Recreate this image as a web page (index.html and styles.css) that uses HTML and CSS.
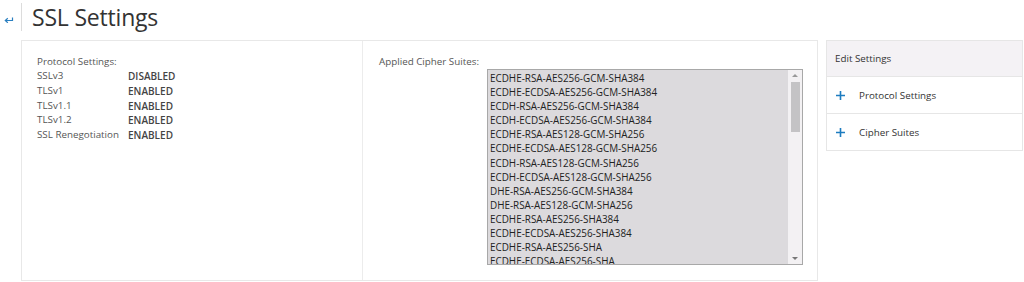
FILE: index.html
```html
<!DOCTYPE html>
<html>
<head>
<meta charset="utf-8">
<link rel="stylesheet" href="styles.css">
</head>
<body>
<div class="header">
  <svg class="back" width="10" height="8" viewBox="0 0 10 8"><path d="M1.5 5.5 H8.5 V2.5" fill="none" stroke="#2a7fc0" stroke-width="1.2"/><path d="M3.8 3.2 L1.3 5.5 L3.8 7.8" fill="none" stroke="#2a7fc0" stroke-width="1.2"/></svg>
  <div class="sep"></div>
  <h1 class="title">SSL Settings</h1>
</div>
<div class="main">
  <div class="panel">
    <div class="col-left">
      <div class="label">Protocol Settings:</div>
      <div class="proto-grid">
        <span>SSLv3</span><b>DISABLED</b>
        <span>TLSv1</span><b>ENABLED</b>
        <span>TLSv1.1</span><b>ENABLED</b>
        <span>TLSv1.2</span><b>ENABLED</b>
        <span>SSL Renegotiation</span><b>ENABLED</b>
      </div>
    </div>
    <div class="col-right">
      <div class="label">Applied Cipher Suites:</div>
      <div class="listbox">
        <div class="items">
          <div>ECDHE-RSA-AES256-GCM-SHA384</div>
          <div>ECDHE-ECDSA-AES256-GCM-SHA384</div>
          <div>ECDH-RSA-AES256-GCM-SHA384</div>
          <div>ECDH-ECDSA-AES256-GCM-SHA384</div>
          <div>ECDHE-RSA-AES128-GCM-SHA256</div>
          <div>ECDHE-ECDSA-AES128-GCM-SHA256</div>
          <div>ECDH-RSA-AES128-GCM-SHA256</div>
          <div>ECDH-ECDSA-AES128-GCM-SHA256</div>
          <div>DHE-RSA-AES256-GCM-SHA384</div>
          <div>DHE-RSA-AES128-GCM-SHA256</div>
          <div>ECDHE-RSA-AES256-SHA384</div>
          <div>ECDHE-ECDSA-AES256-SHA384</div>
          <div>ECDHE-RSA-AES256-SHA</div>
          <div>ECDHE-ECDSA-AES256-SHA</div>
        </div>
        <div class="scrollbar">
          <div class="arrow up"></div>
          <div class="track"><div class="thumb"></div></div>
          <div class="arrow down"></div>
        </div>
      </div>
    </div>
  </div>
  <div class="card">
    <div class="card-head">Edit Settings</div>
    <div class="card-row"><svg class="plus" width="9" height="9" viewBox="0 0 9 9"><path d="M4.5 0 V9 M0 4.5 H9" stroke="#1d7cc0" stroke-width="1.6"/></svg>Protocol Settings</div>
    <div class="card-row"><svg class="plus" width="9" height="9" viewBox="0 0 9 9"><path d="M4.5 0 V9 M0 4.5 H9" stroke="#1d7cc0" stroke-width="1.6"/></svg>Cipher Suites</div>
  </div>
</div>
</body>
</html>
```
FILE: styles.css
```css
html, body {
  margin: 0;
  padding: 0;
  background: #ffffff;
  font-family: "Open Sans", "Noto Sans", sans-serif;
  color: #444;
}
.header {
  display: flex;
  align-items: center;
  height: 34px;
  padding-left: 4px;
}
.back {
  margin-top: 3px;
}
.sep {
  width: 1px;
  height: 28px;
  background: #dcdcdc;
  margin-left: 7px;
  margin-right: 10px;
}
.title {
  margin: 0;
  font-weight: 400;
  font-size: 23px;
  color: #333;
  letter-spacing: -0.2px;
}
.main {
  display: flex;
  gap: 8px;
  padding-left: 21px;
  margin-top: 6px;
}
.panel {
  width: 795px;
  height: 239px;
  border: 1px solid #e8e8e8;
  display: flex;
}
.col-left {
  width: 325px;
  border-right: 1px solid #ececec;
  padding: 14px 0 0 15px;
}
.label {
  font-size: 9.8px;
  color: #555;
  line-height: 14px;
}
.proto-grid {
  display: grid;
  grid-template-columns: 91px auto;
  font-size: 9.8px;
  line-height: 14.8px;
  color: #555;
}
.proto-grid b {
  font-weight: 600;
  font-size: 10px;
  color: #444;
}
.col-right {
  flex: 1;
  padding: 14px 0 0 16px;
}
.listbox {
  margin-left: 108px;
  margin-top: 0;
  width: 314px;
  height: 194px;
  border: 1px solid #a8a8a8;
  background: #dcdadd;
  display: flex;
  overflow: hidden;
}
.items {
  flex: 1;
  padding: 1px 0 0 2px;
  font-size: 9.9px;
  line-height: 14.1px;
  color: #222;
  overflow: hidden;
  white-space: nowrap;
}
.scrollbar {
  width: 14px;
  background: #f3f1f3;
  display: flex;
  flex-direction: column;
  align-items: center;
}
.track {
  flex: 1;
  width: 100%;
  display: flex;
  justify-content: center;
}
.thumb {
  width: 9px;
  height: 50px;
  background: #c4c3c5;
  margin-top: 1px;
}
.arrow {
  width: 0;
  height: 0;
  margin: 4px 0;
  border-left: 3px solid transparent;
  border-right: 3px solid transparent;
}
.arrow.up {
  border-bottom: 3px solid #999;
}
.arrow.down {
  border-top: 3px solid #777;
}
.card {
  width: 195px;
  height: 109px;
  border: 1px solid #e6e6e6;
  align-self: flex-start;
}
.card-head {
  height: 35px;
  background: #f4f2f5;
  border-bottom: 1px solid #e6e6e6;
  display: flex;
  align-items: center;
  padding-left: 8px;
  font-size: 9.8px;
  color: #333;
}
.card-row {
  height: 36px;
  display: flex;
  align-items: center;
  padding-left: 9px;
  font-size: 9.8px;
  color: #333;
}
.card-row + .card-row {
  border-top: 1px solid #e6e6e6;
}
.plus {
  margin-right: 14px;
}
```
